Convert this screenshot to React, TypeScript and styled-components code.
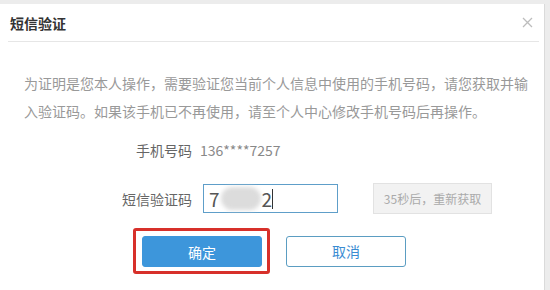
import React from "react";
import styled, { createGlobalStyle } from "styled-components";

const GlobalStyle = createGlobalStyle`
  html, body {
    margin: 0;
    padding: 0;
    background: #ececec;
    font-family: "Noto Sans CJK SC", "Noto Sans", sans-serif;
  }
`;

const Page = styled.div`
  width: 550px;
  height: 290px;
  padding-top: 4px;
  box-sizing: border-box;
  overflow: hidden;
`;

const Dialog = styled.div`
  width: 545px;
  height: 286px;
  background: #fff;
  border-right: 1px solid #dadada;
  box-sizing: border-box;
`;

const Header = styled.div`
  display: flex;
  align-items: center;
  justify-content: space-between;
  height: 38px;
  margin: 0 5px 0 8px;
  padding: 0 6px 0 2px;
  border-bottom: 1px solid #e6e6e6;
  box-sizing: border-box;
`;

const Title = styled.h3`
  margin: 0;
  font-size: 14px;
  font-weight: 700;
  color: #333;
`;

const Close = styled.button`
  display: flex;
  padding: 0;
  border: 0;
  background: none;
  color: #bdbdbd;
`;

const Body = styled.div`
  padding: 27px 10px 0 24px;
`;

const Notice = styled.p`
  margin: 0;
  font-size: 14px;
  line-height: 28px;
  color: #999;
`;

const Form = styled.div`
  display: grid;
  grid-template-columns: 168px auto;
  align-items: center;
  column-gap: 8px;
  margin-top: 15px;
`;

const Label = styled.span`
  text-align: right;
  font-size: 14px;
  color: #666;
`;

const Value = styled.span`
  font-size: 14px;
  color: #888;
`;

const PhoneRow = styled.div`
  display: contents;
`;

const CodeRow = styled.div`
  grid-column: 2;
  display: flex;
  align-items: center;
  gap: 35px;
  margin-left: 3px;
`;

const Spacer = styled.div<{ $h: number }>`
  grid-column: 1 / -1;
  height: ${(p) => p.$h}px;
`;

const Field = styled.div`
  display: flex;
  align-items: center;
  width: 135px;
  height: 29px;
  padding-left: 5px;
  border: 1px solid #5e9ec9;
  box-sizing: border-box;
  font-size: 19px;
  color: #555;
`;

const Smudge = styled.span`
  display: inline-block;
  width: 40px;
  height: 23px;
  margin: 0 1px;
  border-radius: 12px;
  background: #dcdcdc;
  filter: blur(2px);
`;

const Caret = styled.span`
  display: inline-block;
  width: 1px;
  height: 20px;
  background: #333;
`;

const Resend = styled.button`
  width: 119px;
  height: 31px;
  padding: 0;
  border: 1px solid #e2e2e2;
  background: #f2f2f2;
  font-family: inherit;
  font-size: 12px;
  color: #aaa;
`;

const Actions = styled.div`
  display: flex;
  align-items: center;
  gap: 16px;
  margin: 14px 0 0 109px;
`;

const Highlight = styled.span`
  display: flex;
  padding: 5px 5px 4px 6px;
  border: 3px solid #d7302a;
  border-radius: 3px;
`;

const Button = styled.button<{ $primary?: boolean }>`
  width: 120px;
  height: 31px;
  padding: 0;
  border-radius: 3px;
  border: 1px solid ${(p) => (p.$primary ? "#3d96db" : "#5b9dc2")};
  background: ${(p) => (p.$primary ? "#3d96db" : "#fff")};
  color: ${(p) => (p.$primary ? "#fff" : "#3a8cd2")};
  font-family: inherit;
  font-size: 14px;
`;

export default function App() {
  return (
    <>
      <GlobalStyle />
      <Page>
        <Dialog>
          <Header>
            <Title>短信验证</Title>
            <Close aria-label="关闭">
              <svg width="11" height="11" viewBox="0 0 11 11">
                <path d="M1 1L10 10M10 1L1 10" stroke="currentColor" strokeWidth="1.3" />
              </svg>
            </Close>
          </Header>
          <Body>
            <Notice>
              为证明是您本人操作，需要验证您当前个人信息中使用的手机号码，请您获取并输入验证码。如果该手机已不再使用，请至个人中心修改手机号码后再操作。
            </Notice>
            <Form>
              <PhoneRow>
                <Label>手机号码</Label>
                <Value>136****7257</Value>
              </PhoneRow>
              <Spacer $h={23} />
              <Label>短信验证码</Label>
              <CodeRow>
                <Field>
                  7<Smudge />2<Caret />
                </Field>
                <Resend>35秒后，重新获取</Resend>
              </CodeRow>
            </Form>
            <Actions>
              <Highlight>
                <Button $primary>确定</Button>
              </Highlight>
              <Button>取消</Button>
            </Actions>
          </Body>
        </Dialog>
      </Page>
    </>
  );
}
